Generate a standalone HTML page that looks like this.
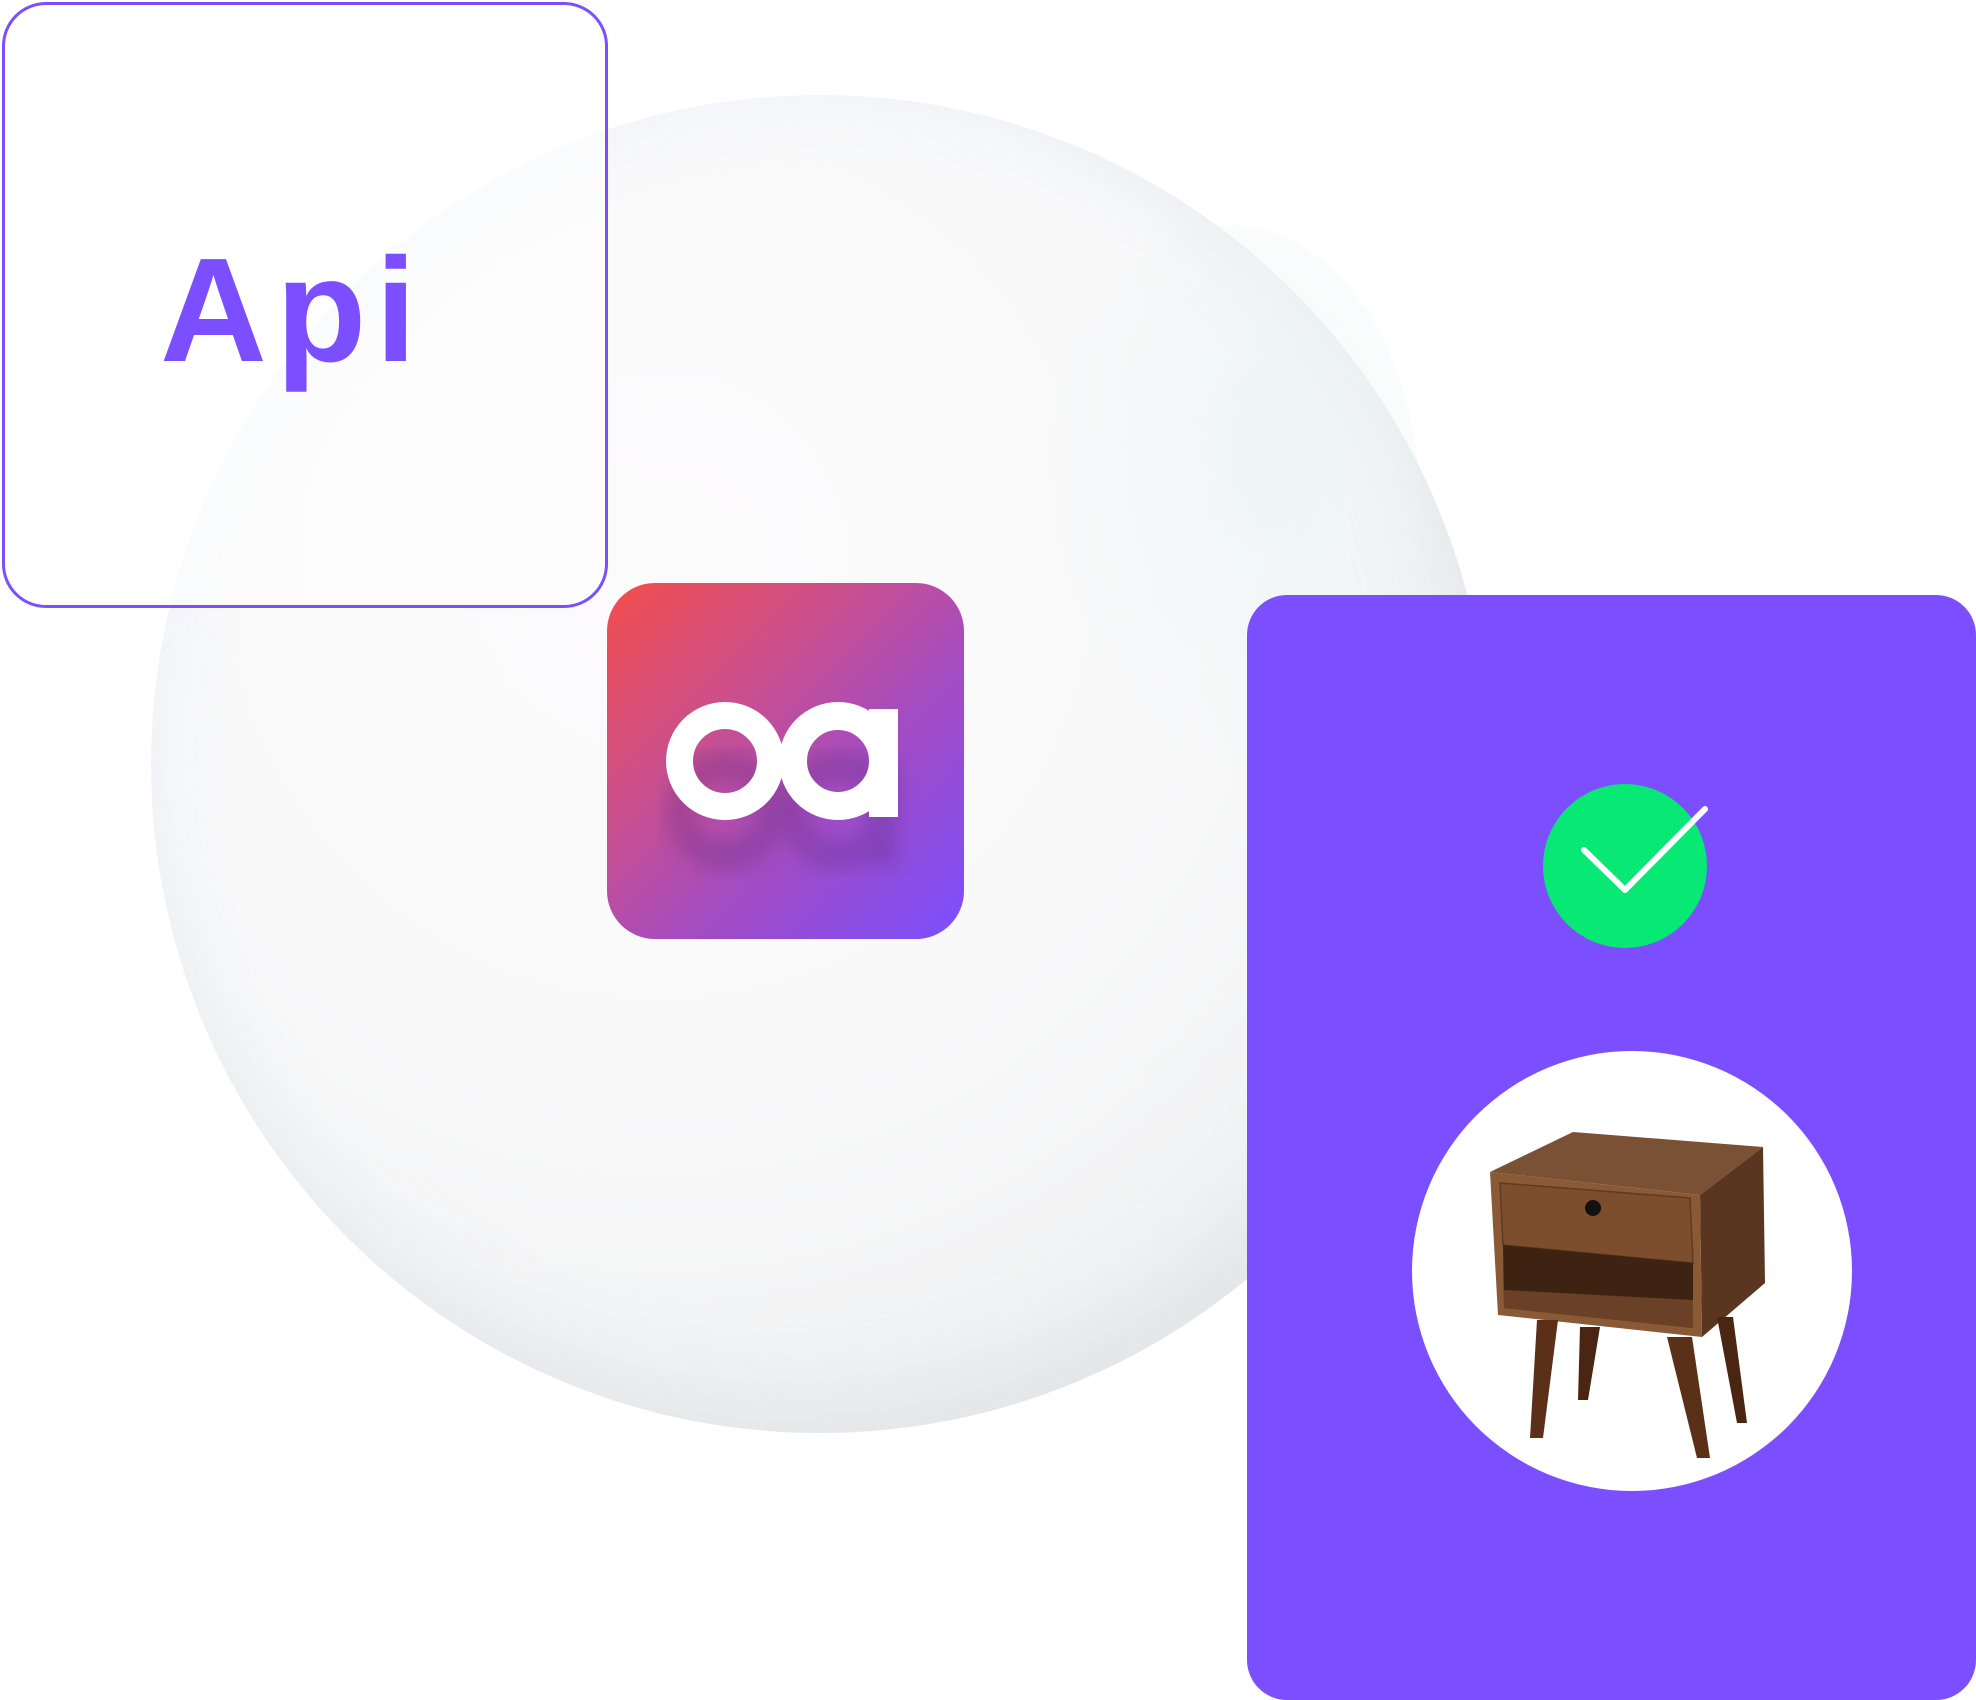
<!DOCTYPE html>
<html><head><meta charset="utf-8"><style>
html,body{margin:0;padding:0;background:#fff;width:1976px;height:1700px;overflow:hidden;position:relative}
.sphere{position:absolute;left:151px;top:95px;width:1338px;height:1338px;border-radius:50%;
background:radial-gradient(circle at 38% 35%,#fcfbfc 0%,#f9f9fa 45%,#f0f1f2 75%,#e6e7ea 100%);
box-shadow:inset -30px -40px 80px rgba(200,205,210,.3), inset 20px 20px 60px rgba(240,245,250,.6)}
.hl{position:absolute;left:1040px;top:225px;width:380px;height:560px;border-radius:50%;
background:radial-gradient(ellipse at 60% 40%,rgba(235,245,244,.7),rgba(240,246,246,0) 70%)}
.api{position:absolute;left:2px;top:2px;width:600px;height:600px;border:3px solid #7b4fff;border-radius:44px;background:rgba(255,255,255,.55)}
.api span{position:absolute;left:155px;top:221px;font:bold 148px "Liberation Sans",sans-serif;color:#7b4fff;letter-spacing:9px}
.oa{position:absolute;left:607px;top:583px;width:357px;height:356px;border-radius:48px;
background:linear-gradient(135deg,#f24e4a 0%,#c94f8f 35%,#a54cc0 60%,#7b4fff 100%);overflow:hidden}
.card{position:absolute;left:1247px;top:595px;width:729px;height:1105px;border-radius:40px;background:#7b4fff}
</style></head><body>
<div class="sphere"></div>
<div class="hl"></div>
<div class="api"><span>Api</span></div>
<div class="oa">
<svg width="357" height="356" viewBox="607 583 357 356">
<defs><filter id="b"><feGaussianBlur stdDeviation="10"/></filter></defs>
<g opacity=".3" filter="url(#b)" fill="#5a2a7a" transform="translate(0,50)">
<circle cx="725" cy="761" r="45" fill="none" stroke="#5a2a7a" stroke-width="27"/>
<circle cx="838" cy="761" r="45" fill="none" stroke="#5a2a7a" stroke-width="27"/>
<rect x="869" y="708" width="29" height="109"/></g>
<circle cx="725" cy="761" r="45.5" fill="none" stroke="#fff" stroke-width="27"/>
<circle cx="838" cy="761" r="45" fill="none" stroke="#fff" stroke-width="28"/>
<rect x="869" y="709" width="29" height="108" fill="#fff"/>
</svg></div>
<div class="card"></div>
<svg style="position:absolute;left:0;top:0" width="1976" height="1700">
<circle cx="1625" cy="866" r="82" fill="#07e874"/>
<polyline points="1584,850 1625,890 1705,809" fill="none" stroke="#fff" stroke-width="6" stroke-linecap="round" stroke-linejoin="round"/>
<circle cx="1632" cy="1271" r="220" fill="#fff"/>
<polygon points="1490,1172 1573,1132 1763,1147 1700,1195" fill="#7a5134"/>
<polygon points="1700,1195 1763,1147 1765,1283 1702,1337" fill="#5a3520"/>
<polygon points="1490,1172 1700,1195 1702,1337 1498,1315" fill="#8a5a37"/>
<polygon points="1500,1183 1690,1198 1693,1263 1503,1245" fill="#7d4e2e" stroke="#5f3a20" stroke-width="1.5"/>
<polygon points="1503,1245 1693,1263 1693,1328 1504,1308" fill="#3e2212"/>
<polygon points="1504,1290 1693,1300 1693,1328 1504,1308" fill="#6a4026"/>
<circle cx="1593" cy="1208" r="8" fill="#111"/>
<polygon points="1537,1320 1558,1320 1543,1438 1530,1438" fill="#5a3018"/>
<polygon points="1580,1327 1600,1327 1588,1400 1578,1400" fill="#4a2612"/>
<polygon points="1667,1337 1692,1337 1710,1458 1697,1458" fill="#5a3018"/>
<polygon points="1717,1317 1733,1317 1747,1423 1737,1423" fill="#4a2612"/>
</svg>
</body></html>
